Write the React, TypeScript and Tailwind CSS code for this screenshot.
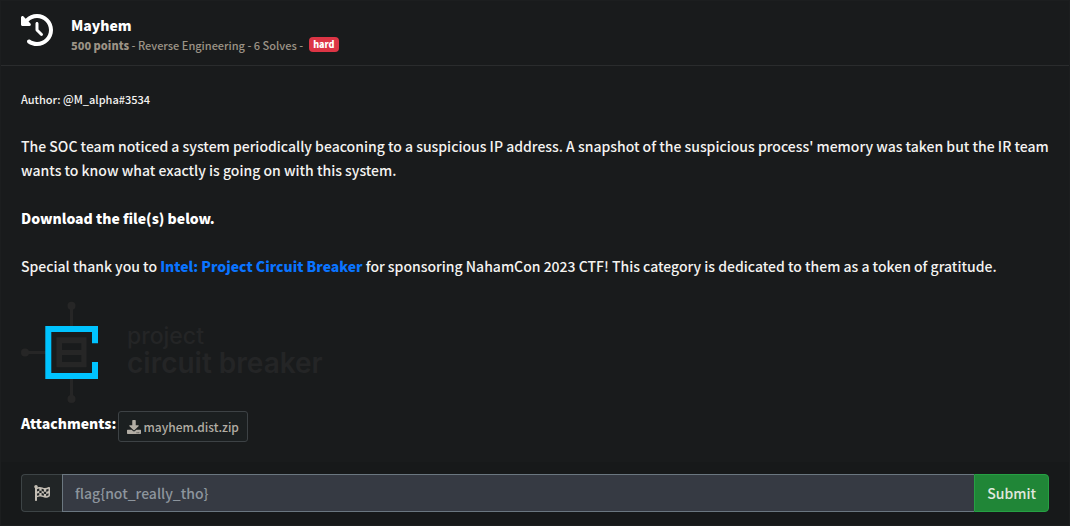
import { FaClockRotateLeft } from "react-icons/fa6";
import { FaDownload, FaFlagCheckered } from "react-icons/fa";

function SponsorLogo() {
  return (
    <svg className="block" width="302" height="104" viewBox="0 0 302 104" role="img" aria-label="project circuit breaker">
      <g fill="#262626">
        <circle cx="50.5" cy="4.7" r="4" />
        <circle cx="4" cy="51.5" r="4" />
        <circle cx="50.5" cy="98" r="4" />
        <rect x="49" y="5" width="3" height="21" />
        <rect x="49" y="77" width="3" height="21" />
        <rect x="4" y="50" width="21" height="3" />
        <path fillRule="evenodd" d="M35.5 36.3h30v30h-30zM41 42.3v6.7h19.3v-6.7zM41 54v7h19.3v-7z" />
      </g>
      <path fill="#00c3ff" d="M24.3 25H77v17.3h-6V31H30.3v41H71V61h6v17H24.3z" />
      <g fill="#242526" fontFamily="Inter, sans-serif">
        <text x="106" y="43" fontSize="23">project</text>
        <text x="106" y="72" fontSize="28" fontWeight="600">circuit breaker</text>
      </g>
    </svg>
  );
}

export default function App() {
  return (
    <div className="min-h-screen bg-[#181a1b] font-['Noto_Sans_CJK_JP',sans-serif] text-base/6 text-[#f4f3f1]">
      <main className="flex min-h-screen flex-col border border-[#1c1e1f] bg-[#191b1c]">
        <header className="flex h-[65px] items-start gap-[18px] border-b border-[#2a2c2d] px-5 pt-3">
          <FaClockRotateLeft size={32} className="mt-px text-white" />
          <div>
            <h1 className="text-sm/6 font-black text-white">Mayhem</h1>
            <p className="flex items-center gap-1.5 text-[11px]/3 font-medium text-[#9c9386]">
              <span><strong className="font-black">500 points</strong> - Reverse Engineering - 6 Solves -</span>
              <span className="rounded bg-[#dc3545] px-1 text-[9px]/[15px] font-black text-white">hard</span>
            </p>
          </div>
        </header>
        <section className="flex-1 px-5 pt-[21px] text-sm/6 font-medium">
          <p className="mb-[23px] text-[11px]/6">Author: @M_alpha#3534</p>
          <p className="mb-6">The SOC team noticed a system periodically beaconing to a suspicious IP address. A snapshot of the suspicious process' memory was taken but the IR team wants to know what exactly is going on with this system.</p>
          <p className="mb-6 font-black text-white">Download the file(s) below.</p>
          <p className="mb-[23px]">
            Special thank you to <a href="#sponsor" className="font-black text-[#0a74ff]">Intel: Project Circuit Breaker</a> for sponsoring NahamCon 2023 CTF! This category is dedicated to them as a token of gratitude.
          </p>
          <SponsorLogo />
          <div className="mt-[6px] flex items-start gap-0.5">
            <strong className="font-black text-white">Attachments:</strong>
            <a href="#mayhem.dist.zip" className="flex h-[31px] items-center gap-0.5 rounded-[3px] border border-[#3d4245] bg-[#1b1f20] px-2 text-xs font-medium text-[#b2ada4]">
              <FaDownload size={14} /> mayhem.dist.zip
            </a>
          </div>
        </section>
        <form className="flex h-[63px] bg-[#17191a] px-5 pt-3" onSubmit={(e) => e.preventDefault()}>
          <label htmlFor="flag" aria-label="Flag" className="flex h-[38px] w-[41px] items-center justify-center rounded-l border border-r-0 border-[#3d4446] bg-[#212526] text-[#c4beb4]">
            <FaFlagCheckered size={16} />
          </label>
          <input id="flag" placeholder="flag{not_really_tho}" className="h-[38px] min-w-0 flex-1 border border-r-0 border-[#6b7780] bg-[#363a43] px-3 text-sm font-medium outline-none placeholder:text-[#8d959d]" />
          <button className="h-[38px] rounded-r border border-[#26a043] bg-[#208637] px-3 text-sm font-medium text-[#e0e8df]">Submit</button>
        </form>
      </main>
    </div>
  );
}
